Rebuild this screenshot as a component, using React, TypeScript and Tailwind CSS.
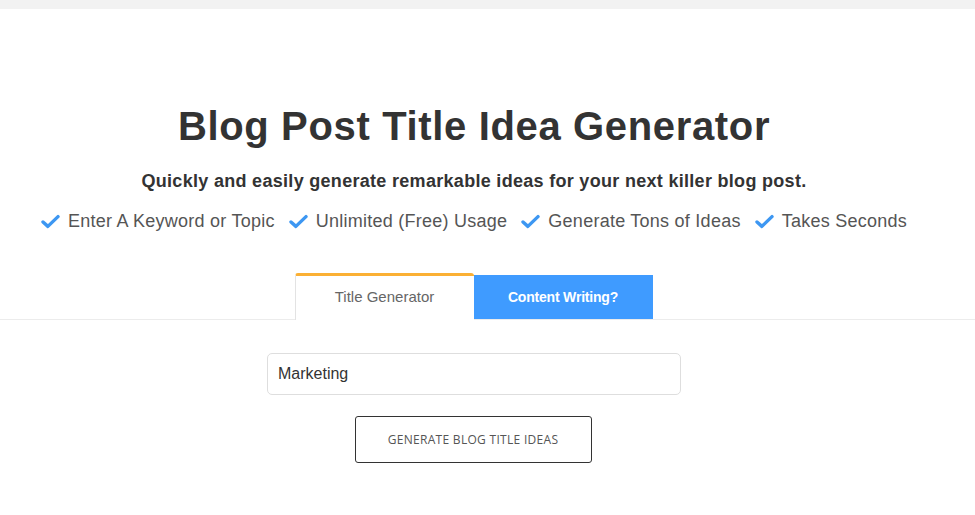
import { useState } from 'react'

const features = [
  'Enter A Keyword or Topic',
  'Unlimited (Free) Usage',
  'Generate Tons of Ideas',
  'Takes Seconds',
]

function Check() {
  return (
    <svg viewBox="0 0 20 16" className="w-[19px] h-[15px] shrink-0" aria-hidden>
      <path d="M2 8.5 L7.2 13.2 L18 2.8" fill="none" stroke="#3d97f2" strokeWidth="3.6" strokeLinecap="round" strokeLinejoin="round" />
    </svg>
  )
}

export default function App() {
  const [keyword, setKeyword] = useState('Marketing')

  return (
    <div className="w-[975px] h-[515px] bg-white overflow-hidden font-[family-name:'Liberation_Sans',Arial,sans-serif]">
      {/* top strip */}
      <div className="h-[9px] bg-[#f2f2f2]" />

      <div className="w-[948px] flex flex-col items-center pt-[91px]">
        <h1 className="text-[40px] leading-[52px] font-bold text-[#333] tracking-[0.65px]">Blog Post Title Idea Generator</h1>
        <p className="mt-[17px] text-[18px] leading-[24px] font-bold text-[#333] tracking-[0.3px]">
          Quickly and easily generate remarkable ideas for your next killer blog post.
        </p>
        <ul className="mt-[15px] flex items-center gap-[14px] text-[18px] leading-[26px] text-[#555] tracking-[0.25px]">
          {features.map((f) => (
            <li key={f} className="flex items-center gap-[8px]">
              <Check />
              <span>{f}</span>
            </li>
          ))}
        </ul>
      </div>

      {/* tabs */}
      <div className="mt-[39px] border-b border-[#ececec]">
        <div className="w-[948px] flex justify-center">
          <div className="flex items-end ml-[-1px]">
            <button className="w-[179px] h-[47px] bg-white border-t-[3px] border-t-[#fbb034] border-l border-l-[#e3e3e3] rounded-t-[3px] text-[15px] text-[#666] mb-[-1px] pb-[2px]">
              Title Generator
            </button>
            <button className="w-[179px] h-[44px] bg-[#3f9bff] text-[14px] font-bold text-white tracking-[-0.2px]">
              Content Writing?
            </button>
          </div>
        </div>
      </div>

      <div className="w-[948px] flex flex-col items-center pt-[33px]">
        <input
          value={keyword}
          onChange={(e) => setKeyword(e.target.value)}
          className="w-[414px] h-[42px] border border-[#dedede] rounded-[5px] px-[10px] text-[16px] text-[#333] outline-none"
        />
        <button className="mt-[21px] ml-[-2px] w-[237px] h-[47px] border border-[#333] rounded-[3px] text-[12px] text-[#555] font-[family-name:'Open_Sans',sans-serif] tracking-[0.3px]">
          GENERATE BLOG TITLE IDEAS
        </button>
      </div>
    </div>
  )
}
